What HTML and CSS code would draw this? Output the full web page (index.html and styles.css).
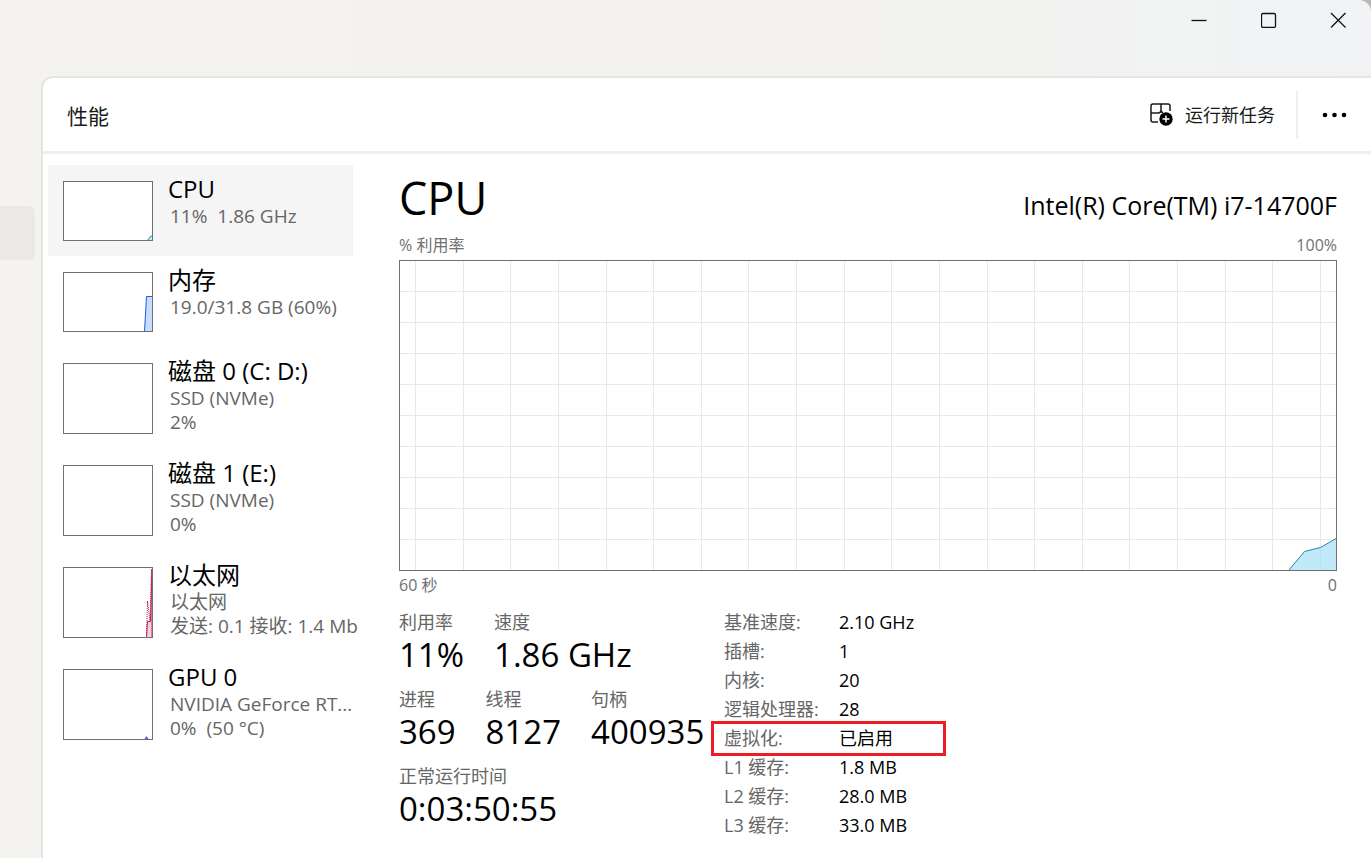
FILE: index.html
```html
<!DOCTYPE html>
<html lang="zh-CN">
<head>
  <meta charset="UTF-8" />
  <meta name="viewport" content="width=device-width, initial-scale=1">
  <title>任务管理器</title>
  <link rel="stylesheet" href="styles.css">
</head>
<body>

  <div class="window">
    <header class="titlebar">
      <button class="win-btn" aria-label="最小化">
        <svg width="16" height="16" viewBox="0 0 16 16"><path d="M0.500 8.500H15.500" /></svg>
      </button>
      <button class="win-btn" aria-label="最大化">
        <svg width="16" height="16" viewBox="0 0 16 16"><rect x="0.500" y="1.500" width="14" height="14" rx="1.500" /></svg>
      </button>
      <button class="win-btn" aria-label="关闭">
        <svg width="16" height="16" viewBox="0 0 16 16"><path d="M1 1L15.500 15.500M15.500 1L1 15.500" /></svg>
      </button>
    </header>

    <div class="body">
      <nav class="rail">
        <div class="rail-active"></div>
      </nav>

      <main class="panel">
        <div class="toolbar">
          <h1>性能</h1>
          <div class="actions">
            <button class="run-task">
              <svg width="24" height="24" viewBox="0 0 24 24">
                <path class="line" d="M21 9V4Q21 2 19 2H4Q2 2 2 4V18Q2 20 4 20H9M12 2V8Q12 11 9 11H2M12 8Q12 10.500 14 10.500" />
                <circle cx="17" cy="17" r="6.700" />
                <path class="plus" d="M17 13.500V20.500M13.500 17H20.500" />
              </svg>
              运行新任务
            </button>
            <button class="more" aria-label="更多选项">
              <svg width="26" height="6" viewBox="0 0 26 6">
                <circle cx="3" cy="3" r="2.300" /><circle cx="12.500" cy="3" r="2.300" /><circle cx="22" cy="3" r="2.300" />
              </svg>
            </button>
          </div>
        </div>

        <div class="content">
          <div class="devices">
            <button class="device selected">
              <svg class="thumb" width="90" height="60" viewBox="0 0 90 60">
                <path class="cpu" d="M84.500 59.500L87 56L89.500 54.500V59.500Z" />
                <rect class="frame" x="0.500" y="0.500" width="89" height="59" />
              </svg>
              <span class="info">
                <span class="name">CPU</span>
                <span class="sub">11%&nbsp; 1.86 GHz</span>
              </span>
            </button>
            <button class="device">
              <svg class="thumb" width="90" height="60" viewBox="0 0 90 60">
                <path class="memory" d="M81.500 59.500L83.500 24.500H90V59.500Z" />
                <rect class="frame" x="0.500" y="0.500" width="89" height="59" />
              </svg>
              <span class="info">
                <span class="name">内存</span>
                <span class="sub">19.0/31.8 GB (60%)</span>
              </span>
            </button>
            <button class="device">
              <svg class="thumb" width="90" height="71" viewBox="0 0 90 71">
                <rect class="frame" x="0.500" y="0.500" width="89" height="70" />
              </svg>
              <span class="info">
                <span class="name">磁盘 0 (C: D:)</span>
                <span class="sub">SSD (NVMe)</span>
                <span class="sub">2%</span>
              </span>
            </button>
            <button class="device">
              <svg class="thumb" width="90" height="71" viewBox="0 0 90 71">
                <rect class="frame" x="0.500" y="0.500" width="89" height="70" />
              </svg>
              <span class="info">
                <span class="name">磁盘 1 (E:)</span>
                <span class="sub">SSD (NVMe)</span>
                <span class="sub">0%</span>
              </span>
            </button>
            <button class="device">
              <svg class="thumb" width="90" height="71" viewBox="0 0 90 71">
                <path class="net" d="M83.500 70.500L84.500 54.500H87.500L89 2V70.500Z" />
                <path class="net-sent" d="M83.500 68L84.500 34L87 54L88.500 2" />
                <rect class="frame" x="0.500" y="0.500" width="89" height="70" />
              </svg>
              <span class="info">
                <span class="name">以太网</span>
                <span class="sub">以太网</span>
                <span class="sub">发送: 0.1 接收: 1.4 Mb</span>
              </span>
            </button>
            <button class="device">
              <svg class="thumb" width="90" height="71" viewBox="0 0 90 71">
                <rect class="frame" x="0.500" y="0.500" width="89" height="70" />
                <path class="gpu" d="M81.500 70L83.500 67L85.500 70Z" />
              </svg>
              <span class="info">
                <span class="name">GPU 0</span>
                <span class="sub">NVIDIA GeForce RT...</span>
                <span class="sub">0%&nbsp; (50 °C)</span>
              </span>
            </button>
          </div>

          <section class="detail">
            <div class="heading">
              <h2>CPU</h2>
              <span class="model">Intel(R) Core(TM) i7-14700F</span>
            </div>
            <div class="axis axis-top"><span>% 利用率</span><span>100%</span></div>
            <svg class="chart" viewBox="0 0 938 311" preserveAspectRatio="none">
              <path class="grid" d="M16.500 0V310M64.500 0V310M111.500 0V310M159.500 0V310M207.500 0V310M254.500 0V310M302.500 0V310M349.500 0V310M397.500 0V310M445.500 0V310M492.500 0V310M540.500 0V310M588.500 0V310M635.500 0V310M683.500 0V310M730.500 0V310M778.500 0V310M826.500 0V310M873.500 0V310M921.500 0V310M0 31.500H938M0 62.500H938M0 93.500H938M0 124.500H938M0 155.500H938M0 186.500H938M0 217.500H938M0 248.500H938M0 279.500H938" />
              <path class="cpu" d="M889.500 310.500L905.500 291.500L921.500 287.500L938 278V310.500Z" />
              <rect class="frame" x="0.500" y="0.500" width="937" height="310" />
            </svg>
            <div class="axis axis-bottom"><span>60 秒</span><span>0</span></div>

            <div class="stats">
              <div class="live">
                <div class="row">
                  <div><span class="label">利用率</span><span class="value">11%</span></div>
                  <div><span class="label">速度</span><span class="value">1.86 GHz</span></div>
                </div>
                <div class="row">
                  <div><span class="label">进程</span><span class="value">369</span></div>
                  <div><span class="label">线程</span><span class="value">8127</span></div>
                  <div><span class="label">句柄</span><span class="value">400935</span></div>
                </div>
                <div class="row">
                  <div><span class="label">正常运行时间</span><span class="value">0:03:50:55</span></div>
                </div>
              </div>

              <table class="specs">
                <tr><th scope="row">基准速度:</th><td>2.10 GHz</td></tr>
                <tr><th scope="row">插槽:</th><td>1</td></tr>
                <tr><th scope="row">内核:</th><td>20</td></tr>
                <tr><th scope="row">逻辑处理器:</th><td>28</td></tr>
                <tr class="marked"><th scope="row">虚拟化:</th><td>已启用</td></tr>
                <tr><th scope="row">L1 缓存:</th><td>1.8 MB</td></tr>
                <tr><th scope="row">L2 缓存:</th><td>28.0 MB</td></tr>
                <tr><th scope="row">L3 缓存:</th><td>33.0 MB</td></tr>
              </table>
            </div>
          </section>
        </div>
      </main>
    </div>
  </div>

</body>
</html>
```
FILE: styles.css
```css
* {
  box-sizing: border-box;
  margin: 0;
  padding: 0;
}

body {
  font-family: "Open Sans", "Noto Sans CJK SC", sans-serif;
  font-size: 18px;
  color: #000;
  background: #b8b8b8;
}

button {
  font: inherit;
  color: inherit;
  border: none;
  background: none;
  cursor: pointer;
}

svg {
  display: block;
  flex: none;
}

.window {
  min-height: 100vh;
  display: flex;
  flex-direction: column;
  background: linear-gradient(to right, #f4f3ef, #f3f2ef 60%, #f1f3f5);
  border-top-right-radius: 12px;
  overflow: hidden;
}

.titlebar {
  height: 76px;
  display: flex;
  justify-content: flex-end;
  gap: 2px;
}

.win-btn {
  width: 68px;
  height: 40px;
  display: flex;
  align-items: center;
  justify-content: center;
}

.win-btn:last-child {
  width: 66px;
}

.win-btn:hover {
  background: #e5e5e5;
}

.win-btn svg {
  fill: none;
  stroke: #111;
  stroke-width: 1.3;
}

.body {
  flex: 1;
  display: flex;
}

.rail {
  width: 41px;
  padding-top: 130px;
}

.rail-active {
  width: 35px;
  height: 54px;
  background: #eae9e5;
  border-radius: 0 6px 6px 0;
}

.panel {
  flex: 1;
  background: #fff;
  border-top: 2px solid #e5e5e2;
  border-left: 2px solid #e5e5e2;
  border-top-left-radius: 12px;
}

.toolbar {
  display: flex;
  align-items: center;
  justify-content: space-between;
  height: 76px;
  padding-left: 24px;
  border-bottom: 3px solid #efefef;
}

.toolbar h1 {
  font-size: 21px;
  font-weight: 400;
  color: #1a1a1a;
}

.actions {
  display: flex;
  align-items: center;
}

.run-task {
  display: flex;
  align-items: center;
  gap: 12px;
  height: 48px;
  padding: 0 21px 2px 0;
  color: #1a1a1a;
  border-right: 2px solid #eee;
}

.run-task .line {
  fill: none;
  stroke: #1a1a1a;
  stroke-width: 1.5;
}

.run-task .plus {
  stroke: #fff;
  stroke-width: 1.5;
}

.more {
  width: 73px;
  height: 48px;
  display: flex;
  align-items: center;
  justify-content: center;
}

.content {
  display: flex;
  gap: 46px;
  padding: 11px 34px 0 5px;
}

.devices {
  width: 305px;
  flex: none;
}

.device {
  width: 100%;
  display: flex;
  align-items: flex-start;
  gap: 15px;
  padding: 0 0 15px 15px;
  text-align: left;
  white-space: nowrap;
}

.device:hover,
.device.selected {
  background: #f5f5f5;
}

.thumb {
  margin-top: 16px;
  background: #fff;
}

.info {
  padding-top: 9px;
}

.name {
  display: block;
  font-size: 24px;
  line-height: 30px;
}

.sub {
  display: block;
  padding-left: 2px;
  font-size: 19px;
  line-height: 24px;
  color: #666;
}

.frame {
  fill: none;
  stroke: #707070;
}

.cpu {
  fill: #c2eaf8;
  stroke: #2387a8;
}

.memory {
  fill: #c8dcff;
  stroke: #1a5fd8;
}

.net {
  fill: #f9cfda;
  stroke: #c02a58;
}

.net-sent {
  fill: none;
  stroke: #b0204c;
  stroke-dasharray: 1 1;
}

.gpu {
  fill: #8a3fe0;
}

.detail {
  flex: 1;
  min-width: 0;
}

.heading {
  display: flex;
  align-items: baseline;
  justify-content: space-between;
  height: 68px;
}

.heading h2 {
  font-size: 45px;
  font-weight: 400;
  line-height: 66px;
}

.model {
  font-size: 25px;
}

.axis {
  display: flex;
  justify-content: space-between;
  font-size: 16px;
  color: #707070;
}

.axis-top {
  height: 27px;
  line-height: 25px;
}

.axis-bottom {
  line-height: 28px;
}

.chart {
  width: 100%;
  height: 311px;
}

.grid {
  fill: none;
  stroke: #e8e8e8;
}

.chart .cpu {
  fill: rgba(150, 220, 245, 0.6);
}

.stats {
  display: flex;
  padding-top: 9px;
}

.live {
  width: 315px;
  flex: none;
}

.row {
  display: flex;
  gap: 30px;
  height: 77px;
  white-space: nowrap;
}

.label,
.value {
  display: block;
}

.label {
  line-height: 28px;
  color: #666;
}

.value {
  font-size: 33px;
  line-height: 38px;
}

.specs {
  width: 229px;
  height: 232px;
  border-collapse: collapse;
  line-height: 29px;
  white-space: nowrap;
}

.specs th {
  width: 125px;
  padding-left: 10px;
  font-weight: 400;
  text-align: left;
  color: #666;
}

.specs .marked {
  outline: 3px solid #ed1c24;
}
```
